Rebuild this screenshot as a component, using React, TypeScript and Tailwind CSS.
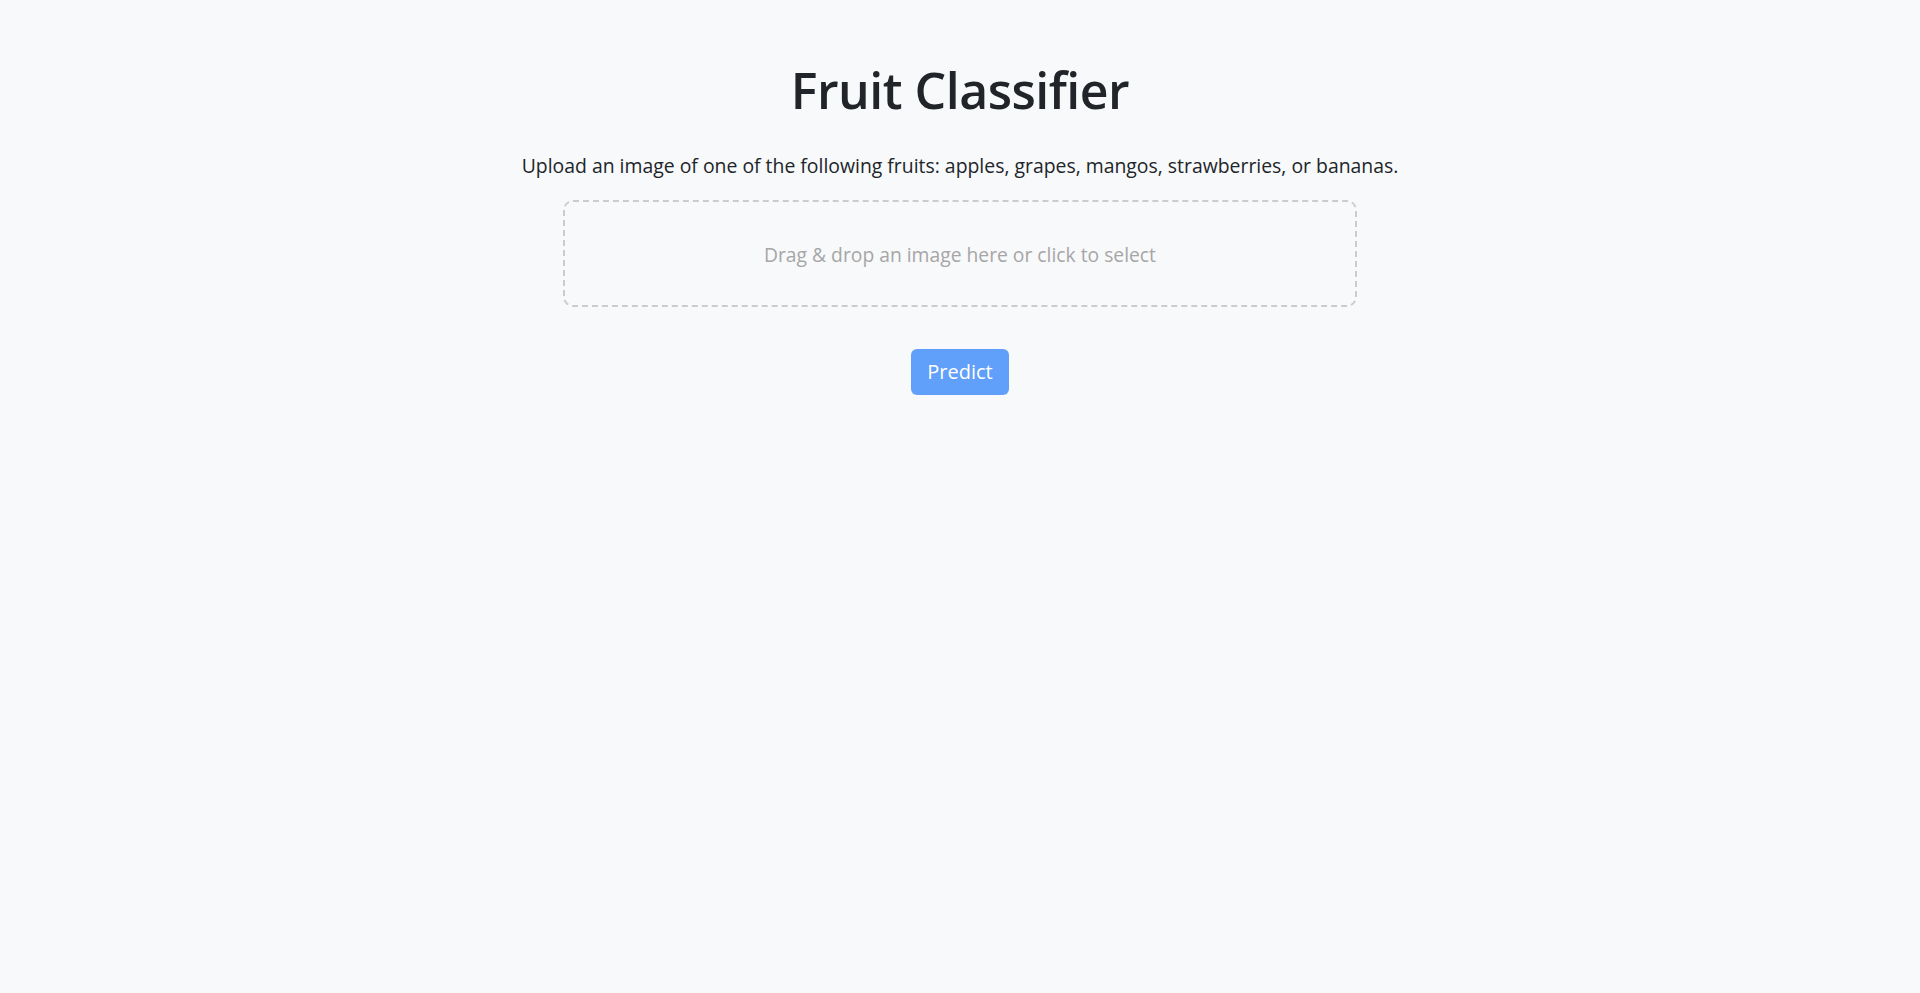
import React from 'react';

const App: React.FC = () => {
  return (
    <div className="min-h-screen bg-[#f8f9fa] font-['Open_Sans',sans-serif] text-[#212529]">
      <div className="flex flex-col items-center pt-[65px]">
        <h1 className="text-[50px] font-semibold leading-none tracking-[-0.5px]">Fruit Classifier</h1>

        <p className="mt-[41px] text-[19.4px] leading-none">
          Upload an image of one of the following fruits: apples, grapes, mangos, strawberries, or bananas.
        </p>

        {/* dropzone */}
        <div className="mt-[25px] w-[794px] h-[107px] border-2 border-dashed border-[#cccccc] rounded-[10px] flex items-center justify-center pt-[4px] cursor-pointer">
          <span className="text-[19.3px] text-[#a6a6a6]">Drag &amp; drop an image here or click to select</span>
        </div>

        <button className="mt-[42px] w-[98px] h-[46px] rounded-[6px] bg-[#609ffa] text-white text-[20px]">
          Predict
        </button>
      </div>
    </div>
  );
};

export default App;
